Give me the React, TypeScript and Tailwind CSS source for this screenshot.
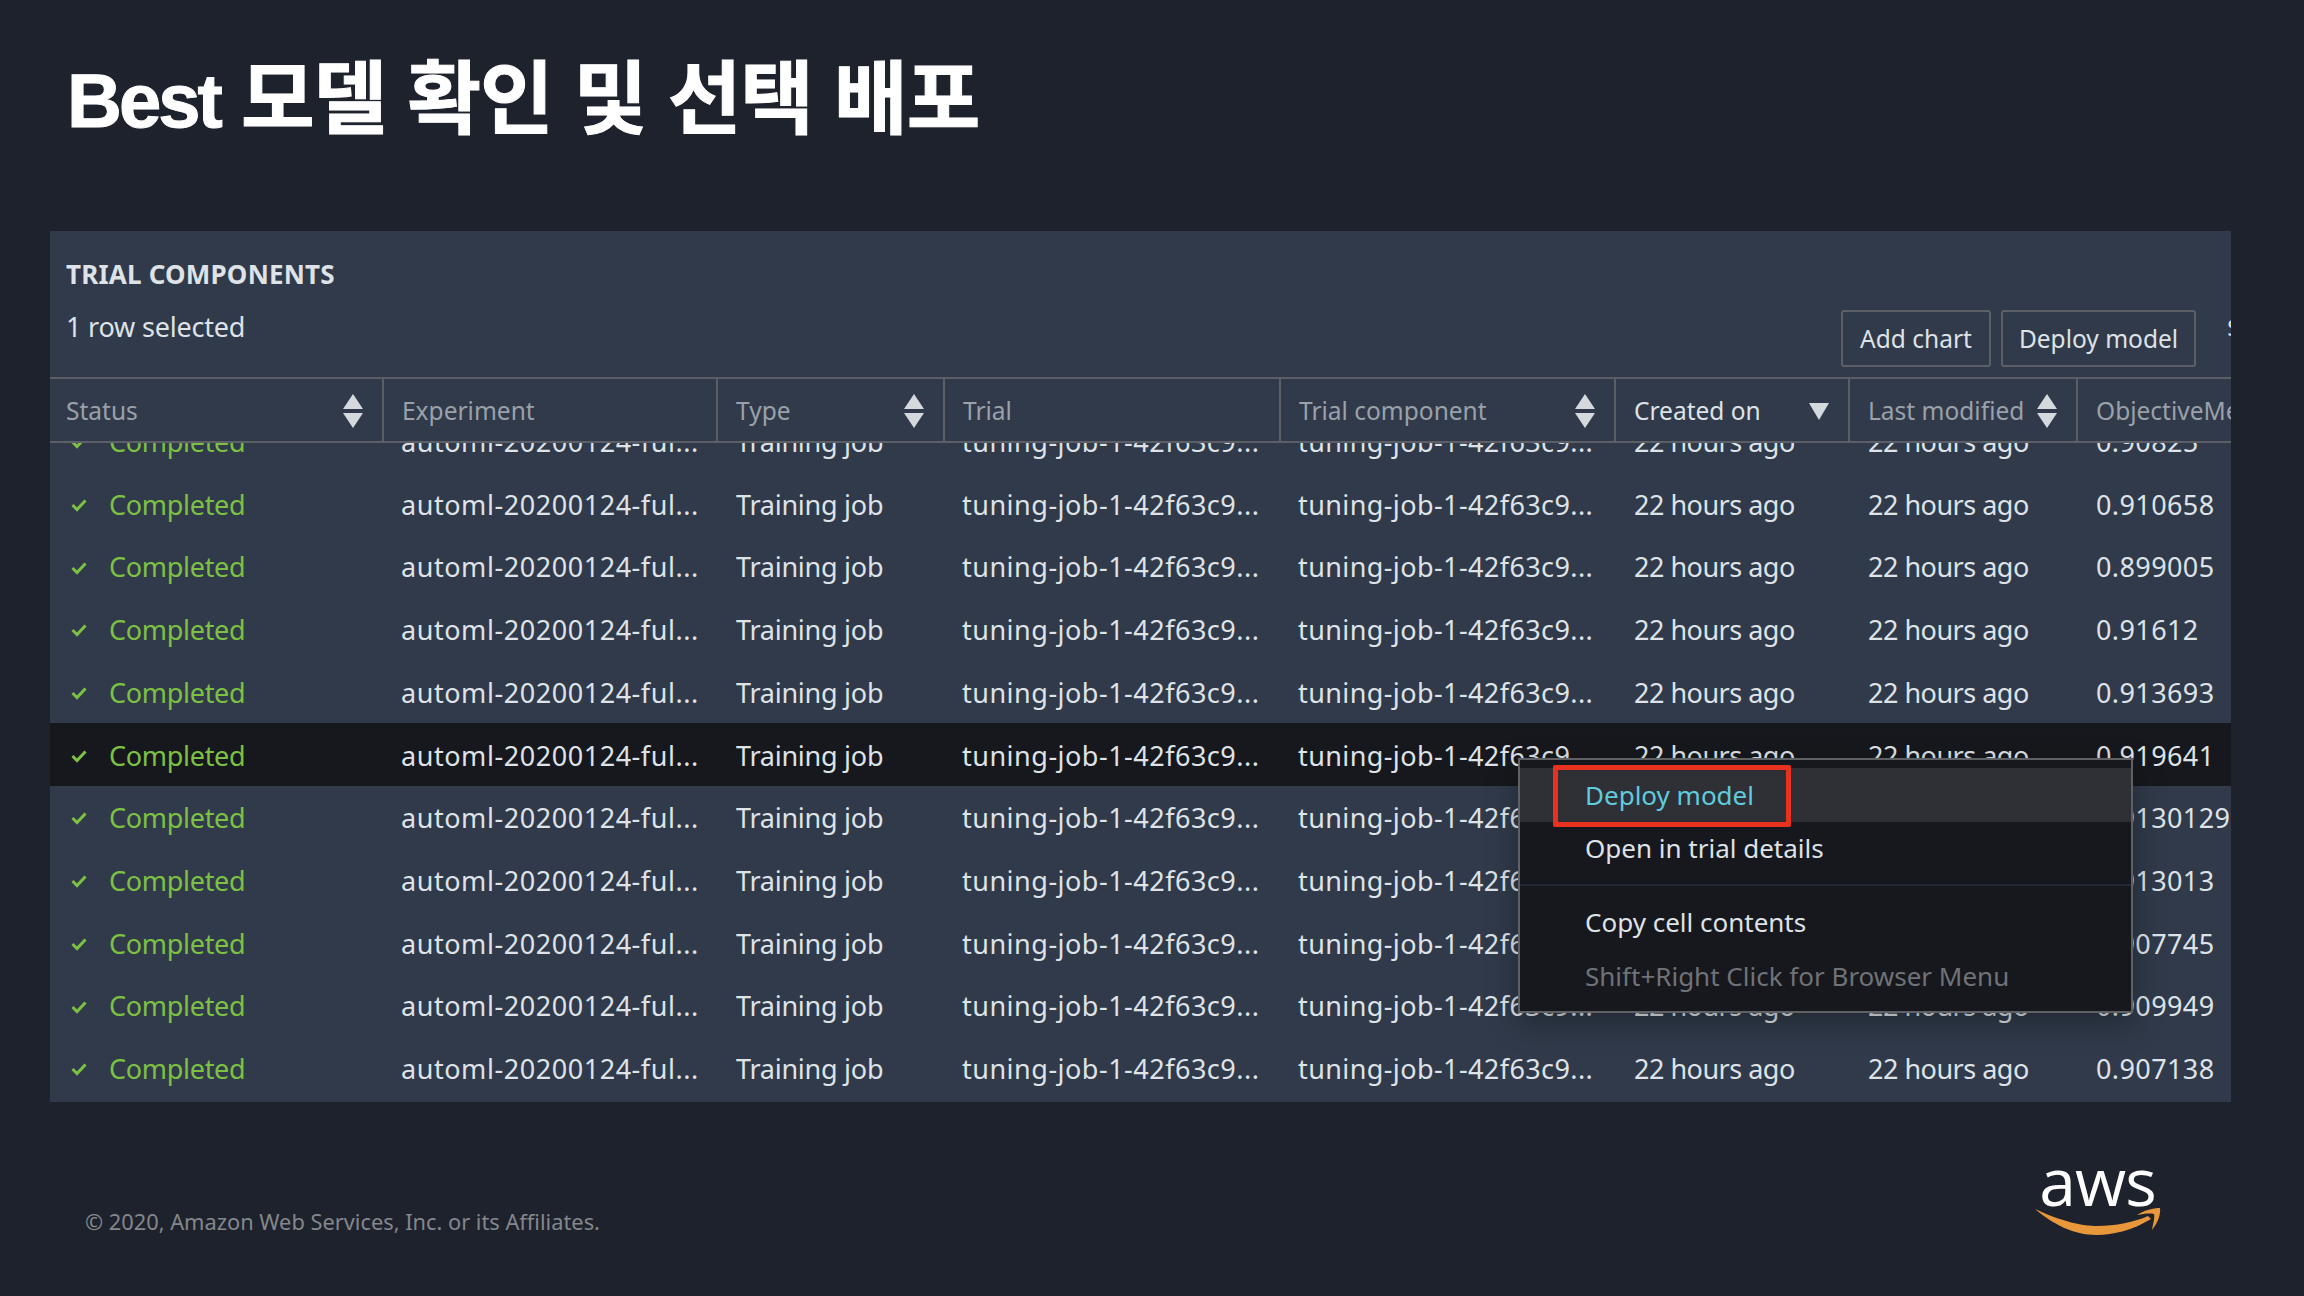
const uiFont = "font-['Noto_Sans','Open_Sans',sans-serif]";

const columns = [
  { label: "Status", width: "w-[334px]", sort: true },
  { label: "Experiment", width: "w-[334px]" },
  { label: "Type", width: "w-[227px]", sort: true },
  { label: "Trial", width: "w-[336px]" },
  { label: "Trial component", width: "w-[335px]", sort: true },
  { label: "Created on", width: "w-[234px]", active: true },
  { label: "Last modified", width: "w-[228px]", sort: true },
  { label: "ObjectiveMetric", width: "flex-1" },
];

const metrics = [
  "0.90825",
  "0.910658",
  "0.899005",
  "0.91612",
  "0.913693",
  "0.919641",
  "0.9130129",
  "0.913013",
  "0.907745",
  "0.909949",
  "0.907138",
];

function SortIcon() {
  return (
    <svg width="20" height="34" viewBox="0 0 20 34" className="shrink-0">
      <path d="M10 0 L20 15 L0 15 Z" fill="#d5d9de" />
      <path d="M0 19 L20 19 L10 34 Z" fill="#d5d9de" />
    </svg>
  );
}

function DownIcon() {
  return (
    <svg width="20" height="17" viewBox="0 0 20 17" className="shrink-0">
      <path d="M0 0 L20 0 L10 17 Z" fill="#d5d9de" />
    </svg>
  );
}

function Check() {
  return (
    <svg width="16" height="14" viewBox="0 0 16 14" className="shrink-0">
      <path d="M1.5 7 L6 11.5 L14.5 2.5" fill="none" stroke="#7dc142" strokeWidth="3" />
    </svg>
  );
}

function Row({ metric, selected }: { metric: string; selected?: boolean }) {
  return (
    <div className={`flex h-[62.7px] items-center whitespace-nowrap pt-[2px] text-[27px] text-[#dfe2e6] ${selected ? "bg-[#16181d]" : ""}`}>
      <div className="flex w-[333px] items-center pl-[21px]">
        <Check />
        <span className="ml-[22px] tracking-[-0.3px] text-[#7dc142]">Completed</span>
      </div>
      <div className="w-[334px] pl-[18px] tracking-[0.55px]">automl-20200124-ful...</div>
      <div className="w-[227px] pl-[19px] tracking-[-0.25px]">Training job</div>
      <div className="w-[336px] pl-[18px] tracking-[0.5px]">tuning-job-1-42f63c9...</div>
      <div className="w-[335px] pl-[18px] tracking-[0.4px]">tuning-job-1-42f63c9...</div>
      <div className="w-[234px] pl-[19px] tracking-[-0.5px]">22 hours ago</div>
      <div className="w-[228px] pl-[19px] tracking-[-0.5px]">22 hours ago</div>
      <div className="flex-1 pl-[19px] tracking-[0.4px]">{metric}</div>
    </div>
  );
}

function ContextMenu() {
  return (
    <div className="absolute left-[1468px] top-[527px] h-[255px] w-[615px] border-2 border-[#5f6165] bg-[#16181d] pt-[8px] text-[26px] text-[#dfe2e6] shadow-[0_10px_30px_rgba(0,0,0,0.3)]">
      <div className="relative flex h-[54px] items-center bg-[#2e3036] pl-[65px] text-[#5fcbdc]">
        Deploy model
        <div className="absolute left-[33px] top-[-3px] h-[62px] w-[238px] rounded-[2px] border-[5px] border-[#e8321f]" />
      </div>
      <div className="flex h-[53px] items-center pl-[65px]">Open in trial details</div>
      <div className="mt-[9px] border-t-2 border-[#232a36]" />
      <div className="mt-[9px] flex h-[54px] items-center pl-[65px]">Copy cell contents</div>
      <div className="flex h-[54px] items-center pl-[65px] text-[#6f7277]">Shift+Right Click for Browser Menu</div>
    </div>
  );
}

function AwsLogo() {
  return (
    <div className="flex w-[125px] flex-col items-center">
      <span className="font-['Open_Sans',sans-serif] text-[66px] leading-[46px] tracking-[-1px] text-white">aws</span>
      <svg width="126" height="28" viewBox="0 0 126 28" className="mt-[5px]">
        <path d="M0 1 C28 14 48 18 62 18 C80 18 100 14 113 8 L116 11 C98 22 78 27 62 27 C38 27 18 16 0 1 Z" fill="#e8983a" />
        <path d="M102 7 C110 2 118 0 125 0 C126 7 122 16 117 22 C118 16 120 10 119 6 C114 5 108 6 102 7 Z" fill="#e8983a" />
      </svg>
    </div>
  );
}

export default function App() {
  return (
    <div className={`flex h-[1296px] w-[2304px] flex-col overflow-hidden bg-[#1e222d] ${uiFont}`}>
      <h1 className="ml-[67px] mt-[52px] h-[179px] font-['Liberation_Sans','Noto_Sans_CJK_KR',sans-serif] text-[80px] font-bold leading-[96px] tracking-[-1px] text-white [-webkit-text-stroke:1px_white]">
        <span className="text-[76px] tracking-[-3px]">Best</span> 모델 확인 및 선택 배포
      </h1>

      <section className="relative ml-[50px] h-[871px] w-[2181px] overflow-hidden bg-[#303a4a]">
        <div className="flex h-[146px] items-start justify-between pl-[16px]">
          <div>
            <div className="mt-[25px] text-[26px] font-bold leading-[36px] tracking-[0.2px] text-[#dfe2e6]">TRIAL COMPONENTS</div>
            <div className="mt-[17px] text-[27px] leading-[36px] tracking-[-0.2px] text-[#dfe2e6]">1 row selected</div>
          </div>
          <div className="mt-[79px] flex items-start text-[24.5px] text-[#dfe2e6]">
            <button className="flex h-[57px] w-[150px] items-center justify-center rounded-[3px] border-2 border-[#5c6066] pt-[2px]">Add chart</button>
            <button className="ml-[10px] flex h-[57px] w-[195px] items-center justify-center rounded-[3px] border-2 border-[#5c6066] pt-[2px]">Deploy model</button>
            <span className="ml-[31px] w-[4px] overflow-hidden">$</span>
          </div>
        </div>

        <div className="flex h-[66px] border-y-2 border-[#5c6066] text-[24.5px]">
          {columns.map((col, i) => (
            <div
              key={col.label}
              className={`flex items-center justify-between overflow-hidden whitespace-nowrap border-r-2 border-[#5c6066] pr-[19px] pt-[2px] last:border-r-0 ${i === 0 ? "pl-[16px]" : "pl-[18px]"} ${col.width} ${col.active ? "text-[#dfe2e6]" : "text-[#9ba1a9]"}`}
            >
              <span>{col.label}</span>
              {col.sort && <SortIcon />}
              {col.active && <DownIcon />}
            </div>
          ))}
        </div>

        <div className="mt-[-33px] h-[690px] [clip-path:inset(33px_0_0_0)]">
          {metrics.map((metric, i) => (
            <Row key={i} metric={metric} selected={i === 5} />
          ))}
        </div>

        <ContextMenu />
      </section>

      <footer className="flex flex-1 items-start justify-between pl-[85px] pr-[144px]">
        <p className="mt-[104px] text-[21.8px] text-[#84878c]">© 2020, Amazon Web Services, Inc. or its Affiliates.</p>
        <div className="mt-[55px]">
          <AwsLogo />
        </div>
      </footer>
    </div>
  );
}
